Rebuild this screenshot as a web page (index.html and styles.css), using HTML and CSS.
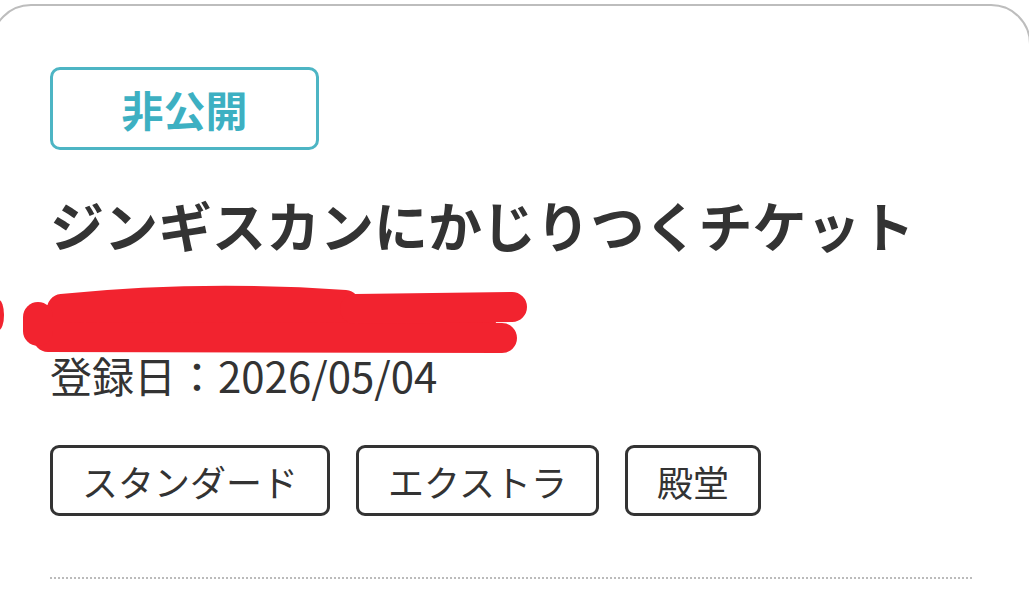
FILE: index.html
```html
<!DOCTYPE html>
<html lang="ja">
<head>
<meta charset="utf-8">
<title>ジンギスカンにかじりつくチケット</title>
<link rel="stylesheet" href="styles.css">
</head>
<body>
<div class="card">
  <div class="badge">非公開</div>
  <h1 class="title">ジンギスカンにかじりつくチケット</h1>
  <div class="redacted">
    <svg class="scribble" width="540" height="100" viewBox="0 0 540 100" aria-hidden="true">
      <ellipse cx="-1" cy="55" rx="5" ry="15" fill="#f2232f"/>
      <g stroke="#f2232f" stroke-linecap="round" fill="none">
        <path d="M62 49 Q200 35 345 45" stroke-width="30"/>
        <path d="M40 61 L480 61" stroke-width="32"/>
        <path d="M48 77 L502 78" stroke-width="30"/>
        <path d="M355 49 L512 47" stroke-width="30"/>
        <path d="M38 57 L38 71" stroke-width="30"/>
      </g>
    </svg>
  </div>
  <div class="date">登録日：2026/05/04</div>
  <div class="tags">
    <span class="tag">スタンダード</span>
    <span class="tag">エクストラ</span>
    <span class="tag">殿堂</span>
  </div>
  <div class="divider"></div>
</div>
</body>
</html>
```

FILE: styles.css
```css
html, body {
  margin: 0;
  padding: 0;
  background: #ffffff;
  overflow: hidden;
}

body {
  width: 1029px;
  height: 613px;
  font-family: "Noto Sans CJK JP", "Noto Sans", sans-serif;
  color: #333333;
}

.card {
  box-sizing: border-box;
  width: 1040px;
  height: 700px;
  margin: 4px 0 0 -9px;
  border: 2px solid #bdbdbd;
  border-radius: 40px;
  padding: 61px 57px 0 57px;
  display: flex;
  flex-direction: column;
  align-items: flex-start;
}

.badge {
  box-sizing: border-box;
  width: 269px;
  height: 83px;
  border: 3px solid #4db5c4;
  border-radius: 10px;
  display: flex;
  align-items: center;
  justify-content: center;
  color: #3db0c2;
  font-weight: 700;
  font-size: 42px;
  line-height: 1;
}

.title {
  margin: 40px 0 0 0;
  font-size: 54px;
  font-weight: 700;
  line-height: 70px;
  color: #333333;
  letter-spacing: 0;
  white-space: nowrap;
}

.redacted {
  height: 88px;
  width: 100%;
}

.scribble {
  display: block;
  margin-left: -50px;
  overflow: visible;
}

.date {
  font-size: 42px;
  line-height: 53px;
  color: #333333;
}

.tags {
  margin-top: 44px;
  display: flex;
  gap: 26px;
}

.tag {
  box-sizing: border-box;
  height: 71px;
  padding: 0 29px;
  border: 3px solid #333333;
  border-radius: 9px;
  display: flex;
  align-items: center;
  justify-content: center;
  font-size: 36px;
  line-height: 1;
  color: #333333;
}

.divider {
  align-self: stretch;
  margin-top: 61px;
  border-top: 2px dotted #bbbbbb;
}
```
